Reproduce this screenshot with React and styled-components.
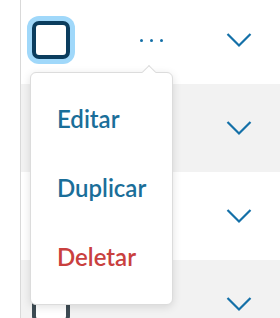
import React from "react";
import styled, { createGlobalStyle } from "styled-components";

const GlobalStyle = createGlobalStyle`
  body {
    margin: 0;
    background: #ffffff;
    font-family: Lato, "Noto Sans", sans-serif;
    overflow: hidden;
  }
`;

const Page = styled.div`
  display: flex;
  width: 280px;
  height: 318px;
  overflow: hidden;
`;

const Gutter = styled.div`
  width: 20px;
  flex-shrink: 0;
  border-right: 1px solid #d9d9d9;
`;

const Table = styled.div`
  flex: 1;
  margin-top: -4px;
`;

const Row = styled.div`
  display: grid;
  grid-template-columns: 90px 80px 1fr;
  align-items: center;
  height: 88px;
  background: ${(p) => (p.$shaded ? "#f2f2f2" : "#ffffff")};
`;

const CheckCell = styled.div`
  padding-left: 11px;
  display: flex;
  align-items: center;
`;

const Checkbox = styled.span`
  box-sizing: border-box;
  width: 38px;
  height: 38px;
  border-radius: 7px;
  border: 4px solid ${(p) => (p.$focused ? "#0b3d5e" : "#3d4b53")};
  background: #ffffff;
  box-shadow: ${(p) => (p.$focused ? "0 0 0 5px #a0d8fa" : "none")};
`;

const MenuCell = styled.div`
  position: relative;
  display: flex;
  justify-content: center;
  align-items: center;
  height: 100%;
`;

const Dots = styled.div`
  display: flex;
  gap: 7px;
`;

const Dot = styled.span`
  width: 3px;
  height: 3px;
  border-radius: 50%;
  background: #1470a8;
`;

const ChevronCell = styled.div`
  display: flex;
  align-items: center;
  padding-left: 35px;
  color: #1470a8;
`;

const Popup = styled.div`
  position: absolute;
  top: 76px;
  left: -81px;
  width: 143px;
  height: 233px;
  box-sizing: border-box;
  padding: 31px 0 0 26px;
  background: #ffffff;
  border: 1px solid #dcdcdc;
  border-radius: 6px;
  box-shadow: 0 2px 8px rgba(0, 0, 0, 0.12);
  display: flex;
  flex-direction: column;
  gap: 40px;
  z-index: 5;

  &::before {
    content: "";
    position: absolute;
    top: -6px;
    left: 113px;
    width: 9px;
    height: 9px;
    background: #ffffff;
    border-top: 1px solid #dcdcdc;
    border-left: 1px solid #dcdcdc;
    transform: rotate(45deg);
  }
`;

const MenuItem = styled.div`
  font-size: 24px;
  line-height: 29px;
  font-weight: 600;
  color: ${(p) => (p.$danger ? "#c9403e" : "#1a6e99")};
`;

const Chevron = () => (
  <svg width="26" height="16" viewBox="0 0 26 16" fill="none">
    <path d="M1.5 2L13 13.5L24.5 2" stroke="currentColor" strokeWidth="2.2" />
  </svg>
);

const rows = [0, 1, 2, 3];

export default function App() {
  return (
    <>
      <GlobalStyle />
      <Page>
        <Gutter />
        <Table>
          {rows.map((i) => (
            <Row key={i} $shaded={i % 2 === 1}>
              <CheckCell>
                <Checkbox $focused={i === 0} />
              </CheckCell>
              <MenuCell>
                {i === 0 && (
                  <>
                    <Dots>
                      <Dot />
                      <Dot />
                      <Dot />
                    </Dots>
                    <Popup>
                      <MenuItem>Editar</MenuItem>
                      <MenuItem>Duplicar</MenuItem>
                      <MenuItem $danger>Deletar</MenuItem>
                    </Popup>
                  </>
                )}
              </MenuCell>
              <ChevronCell>
                <Chevron />
              </ChevronCell>
            </Row>
          ))}
        </Table>
      </Page>
    </>
  );
}
